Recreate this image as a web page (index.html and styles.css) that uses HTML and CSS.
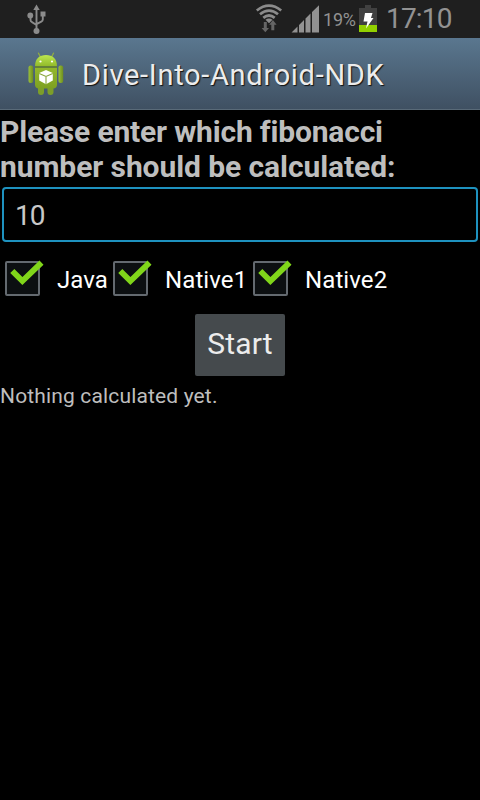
FILE: index.html
```
<!DOCTYPE html>
<html lang="en">
<head>
<meta charset="utf-8">
<title>Dive-Into-Android-NDK</title>
<link rel="stylesheet" href="styles.css">
</head>
<body>
<header class="status">
  <svg class="usb" width="20" height="32" viewBox="0 0 20 32" fill="none" stroke="#8b8b8b" stroke-width="1.9">
    <path d="M9.5 9v20M3.500 16v4q0 1.500 1.500 2.200l4.500 2.800M15.800 15v4.500q0 1.500-1.500 2.200l-4.800 2.500"/>
    <path d="M9.500 4.500l3.200 5.500H6.300z" fill="#8b8b8b" stroke="none"/>
    <circle cx="3.300" cy="15.500" r="2.900" fill="#8b8b8b" stroke="none"/>
    <path d="M13.500 11.500h5v5h-5z" fill="#8b8b8b" stroke="none"/>
    <circle cx="9.500" cy="31" r="3" fill="#8b8b8b" stroke="none"/>
  </svg>
  <svg class="wifi" width="28" height="30" viewBox="0 0 28 30" fill="none" stroke="#8b8b8b" stroke-width="2.700">
    <path d="M1.800 7.500q12.200-9.600 24.400 0M5 11.300q9-7.400 18 0M8.300 14.900q5.700-4.800 11.400 0"/>
    <path d="M10.500 16.800q3.500-2.400 7 0l-3.500 3.500z" fill="#8b8b8b" stroke="none"/>
    <path d="M8.800 19h3v6h2.200l-3.700 4.300-3.700-4.300h2.200zM16.300 27.200v-5.500h-2.100l3.700-4.700 3.700 4.700h-2.300v5.500z" fill="#656565" stroke="none"/>
  </svg>
  <svg class="signal" width="29" height="28" viewBox="0 0 29 28" fill="#929292">
    <path d="M.5 27.500l6-6v6zM8 27.500v-7.500l5-5v12.500zM14.500 27.500v-14l5-5v19zM21 27.500v-20.500l7-6.800v27.300z"/>
  </svg>
  <span class="percent">19%</span>
  <svg class="battery" width="18" height="27" viewBox="0 0 18 27">
    <path d="M0 3h6V0h6v3h6v17H0z" fill="#404040"/>
    <path d="M0 20h18v7H0z" fill="#92d000"/>
    <path d="M6 8h7.500l-1.500 5h2.500l-7.500 10.500 1.500-7H4.500z" fill="#fff"/>
  </svg>
  <span class="clock">17:10</span>
</header>
<div class="titlebar">
  <svg class="robot" width="36" height="44" viewBox="0 0 36 44">
    <defs>
      <linearGradient id="body" x2="0" y2="1"><stop stop-color="#94b82c"/><stop offset="1" stop-color="#7da022"/></linearGradient>
      <linearGradient id="head" x2="0" y2="1"><stop stop-color="#bce650"/><stop offset="1" stop-color="#91b929"/></linearGradient>
      <linearGradient id="limb"><stop stop-color="#9bc038"/><stop offset="1" stop-color="#6d8d20"/></linearGradient>
    </defs>
    <path d="M12.500 5l-2-3.800M23.500 5l2-3.800" stroke="#91ad40" stroke-width="1.300" stroke-linecap="round"/>
    <rect x="10" y="31" width="6" height="12" rx="3" fill="#7d9e29"/>
    <rect x="19.500" y="31" width="6" height="12" rx="3" fill="#7d9e29"/>
    <rect x=".5" y="13.500" width="4.700" height="17.500" rx="2" fill="url(#limb)"/>
    <rect x="30.500" y="13.500" width="4.700" height="17.500" rx="2" fill="url(#limb)"/>
    <path d="M7 15.500h22v17q0 4-4 4H11q-4 0-4-4z" fill="url(#body)"/>
    <path d="M7 14.500C7 6.500 11.500 3 18 3s11 3.500 11 11.500z" fill="url(#head)"/>
    <path d="M7 15h22" stroke="#59731c" stroke-width="1"/>
    <circle cx="12.500" cy="9.500" r="1.100" fill="#fff"/><circle cx="24" cy="9.500" r="1.100" fill="#fff"/>
    <path d="M18 18l6.800 3v7.500L18 32.200l-6.800-3.700V21z" fill="#fff"/>
    <path d="M11.200 21.500l6.800 3 6.800-3M18 24.500v7.700" fill="none" stroke="#88a43b" stroke-width="1.100"/>
  </svg>
  <h1 class="title">Dive-Into-Android-NDK</h1>
</div>
<main class="content">
  <p class="prompt"><span class="line1">Please enter which fibonacci</span><br><span class="line2">number should be calculated:</span></p>
  <div class="field">10</div>
  <div class="checks">
    <div class="check java"><svg class="tick" width="40" height="40" viewBox="0 0 40 40"><rect x="2" y="4" width="33" height="33" rx="1" fill="#0c0f11" stroke="#646a70" stroke-width="2"/><path d="M8.300 13L18.400 23 37.500 4.700" fill="none" stroke="#80d51a" stroke-width="5.800"/></svg><span>Java</span></div>
    <div class="check native"><svg class="tick" width="40" height="40" viewBox="0 0 40 40"><rect x="2" y="4" width="33" height="33" rx="1" fill="#0c0f11" stroke="#646a70" stroke-width="2"/><path d="M8.300 13L18.400 23 37.500 4.700" fill="none" stroke="#80d51a" stroke-width="5.800"/></svg><span>Native1</span></div>
    <div class="check native"><svg class="tick" width="40" height="40" viewBox="0 0 40 40"><rect x="2" y="4" width="33" height="33" rx="1" fill="#0c0f11" stroke="#646a70" stroke-width="2"/><path d="M8.300 13L18.400 23 37.500 4.700" fill="none" stroke="#80d51a" stroke-width="5.800"/></svg><span>Native2</span></div>
  </div>
  <button class="start">Start</button>
  <p class="result">Nothing calculated yet.</p>
</main>
</body>
</html>
```
FILE: styles.css
```
* { box-sizing: border-box; }
body { margin: 0; width: 480px; height: 800px; overflow: hidden; background: #000; color: #bebebe; font-family: Roboto, sans-serif; }
svg { display: block; flex: none; overflow: visible; }
h1, p { margin: 0; font-weight: 400; }
.status { display: flex; align-items: flex-start; height: 38px; background: #1f1f1f; color: #929292; white-space: nowrap; }
.usb { margin-left: 27px; }
.wifi { margin: 3px 0 0 208px; }
.signal { margin: 5px 0 0 8px; }
.percent { width: 36px; margin-left: 3px; padding-top: 1px; font-size: 18px; line-height: 38px; letter-spacing: -.2px; }
.battery { margin: 5px 0 0; }
.clock { margin-left: 9px; font-size: 28px; line-height: 37px; letter-spacing: -.8px; }
.titlebar { display: flex; height: 72px; background: linear-gradient(#5a778f, #3f5062); border-bottom: 1px solid #596a78; }
.robot { margin: 14px 0 0 28px; }
.title { margin-left: 18px; font-size: 29px; line-height: 74px; letter-spacing: .7px; color: #ececec; text-shadow: 1px 1px 1px #111; white-space: nowrap; }
.content { display: flex; flex-direction: column; }
.prompt { height: 77px; padding-top: 4px; font-size: 30px; line-height: 35px; font-weight: 700; white-space: nowrap; }
.line1 { letter-spacing: -.17px; }
.line2 { letter-spacing: -.08px; }
.field { width: 476px; height: 55px; margin-left: 2px; padding-left: 11px; border: 2px solid #1e92bf; border-radius: 4px; font-size: 28px; line-height: 53px; letter-spacing: -1px; color: #c8c8c8; }
.checks { display: flex; height: 72px; padding: 16px 0 0 4px; color: #fff; }
.check { display: flex; font-size: 24px; line-height: 44px; white-space: nowrap; }
.java { width: 108px; }
.native { width: 140px; }
.check span { margin-left: 13px; letter-spacing: .1px; }
.start { align-self: center; width: 90px; height: 62px; padding: 0 0 3px; border: 0; border-radius: 2px; background: #454a4d; color: #ececec; font: 400 30px Roboto, sans-serif; letter-spacing: .2px; }
.result { font-size: 21px; line-height: 40px; letter-spacing: .15px; white-space: nowrap; }
```
